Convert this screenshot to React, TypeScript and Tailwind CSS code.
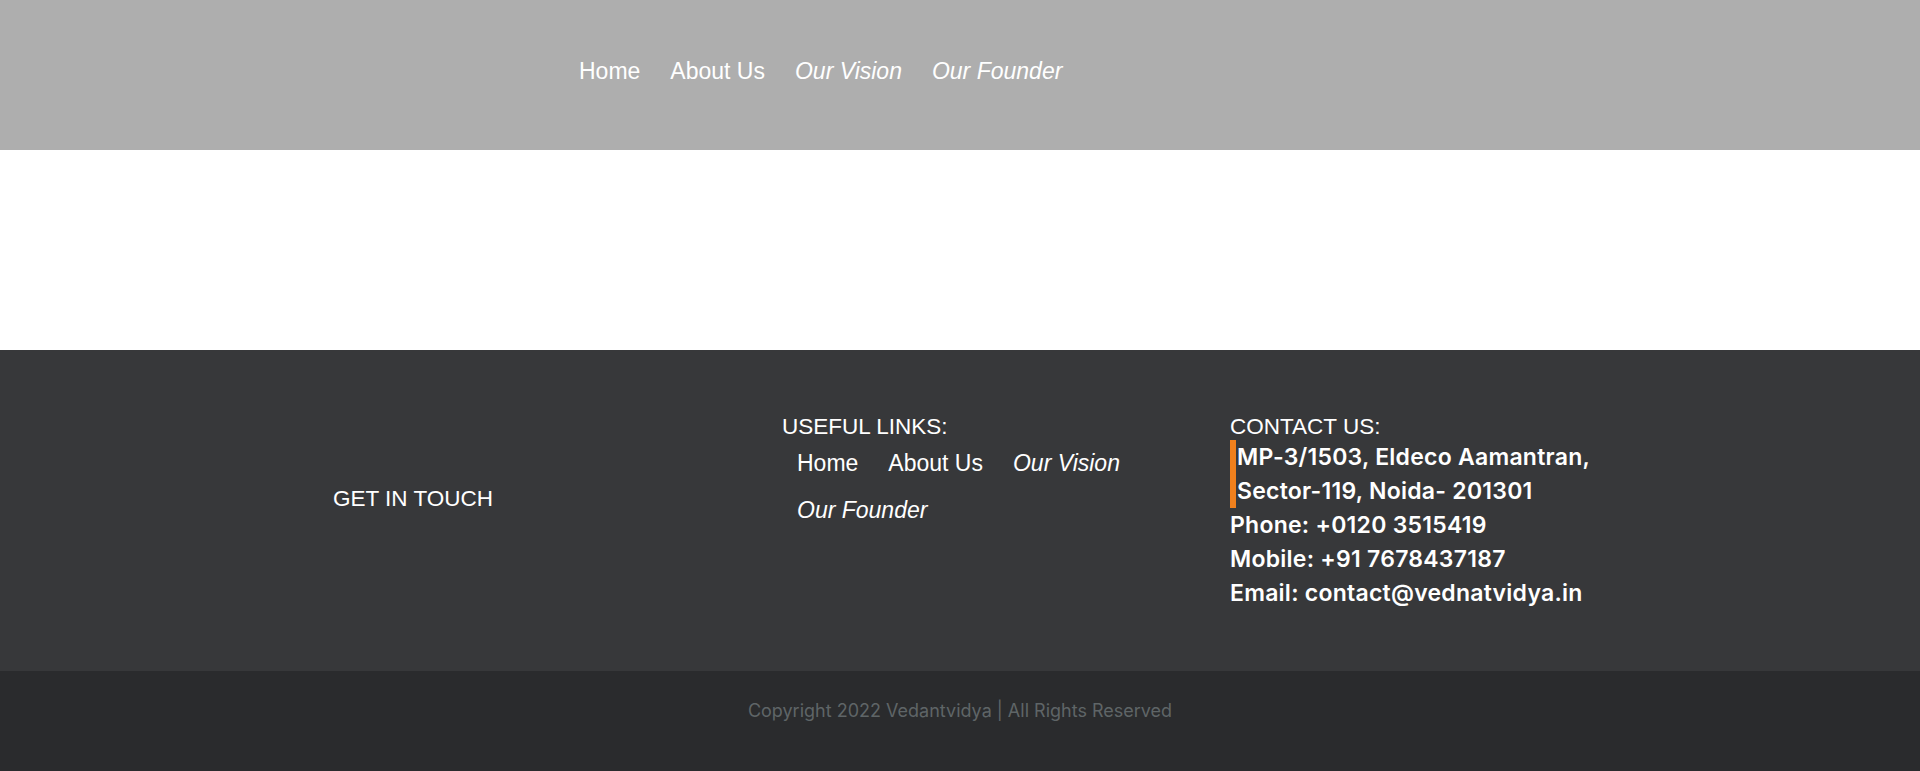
import type { ReactNode } from "react";

const navLinks = [
  { label: "Home", italic: false },
  { label: "About Us", italic: false },
  { label: "Our Vision", italic: true },
  { label: "Our Founder", italic: true },
];

const NavText = ({ children, italic }: { children: ReactNode; italic: boolean }) => (
  <a href="#" className={`whitespace-nowrap text-white ${italic ? "italic" : ""}`}>
    {children}
  </a>
);

const App = () => {
  return (
    <div className="min-h-[771px] bg-white font-['Liberation_Sans',Arial,sans-serif]">
      {/* header */}
      <header className="h-[150px] bg-[#aeaeae] pt-[58px] pl-[579px]">
        <nav className="flex gap-[30px] text-[23px] leading-[26px]">
          {navLinks.map((item) => (
            <NavText key={item.label} italic={item.italic}>
              {item.label}
            </NavText>
          ))}
        </nav>
      </header>

      {/* empty body */}
      <main className="h-[200px] bg-white" />

      {/* footer */}
      <footer className="bg-[#37383a] pt-[64px] pb-[61px] text-white">
        <div className="mx-auto grid w-[1254px] grid-cols-[449px_448px_1fr]">
          <div className="mt-[72px]">
            <p className="text-[22.5px] leading-[26px]">GET IN TOUCH</p>
          </div>

          <div>
            <p className="text-[22.5px] leading-[26px]">USEFUL LINKS:</p>
            <div className="flex w-[420px] flex-wrap pl-[15px] text-[23px] leading-[47px]">
              {navLinks.map((item) => (
                <a key={item.label} href="#" className={`mr-[30px] whitespace-nowrap ${item.italic ? "italic" : ""}`}>
                  {item.label}
                </a>
              ))}
            </div>
          </div>

          <div className="whitespace-nowrap">
            <p className="text-[22.5px] leading-[26px]">CONTACT US:</p>
            <div className="font-['Inter',sans-serif] text-[23px] font-semibold leading-[34px] tracking-[0.25px]">
              <div className="border-l-[6px] border-[#f0801d] pl-[1px]">
                <p>MP-3/1503, Eldeco Aamantran,</p>
                <p>Sector-119, Noida- 201301</p>
              </div>
              <p>Phone: +0120 3515419</p>
              <p>Mobile: +91 7678437187</p>
              <p>Email: contact@vednatvidya.in</p>
            </div>
          </div>
        </div>
      </footer>

      {/* copyright bar */}
      <div className="h-[100px] bg-[#2a2b2d] pt-[28px] text-center">
        <p className="font-['Inter',sans-serif] text-[18px] leading-[24px] text-[#5f6567]">
          Copyright 2022 Vedantvidya | All Rights Reserved
        </p>
      </div>
    </div>
  );
};

export default App;
